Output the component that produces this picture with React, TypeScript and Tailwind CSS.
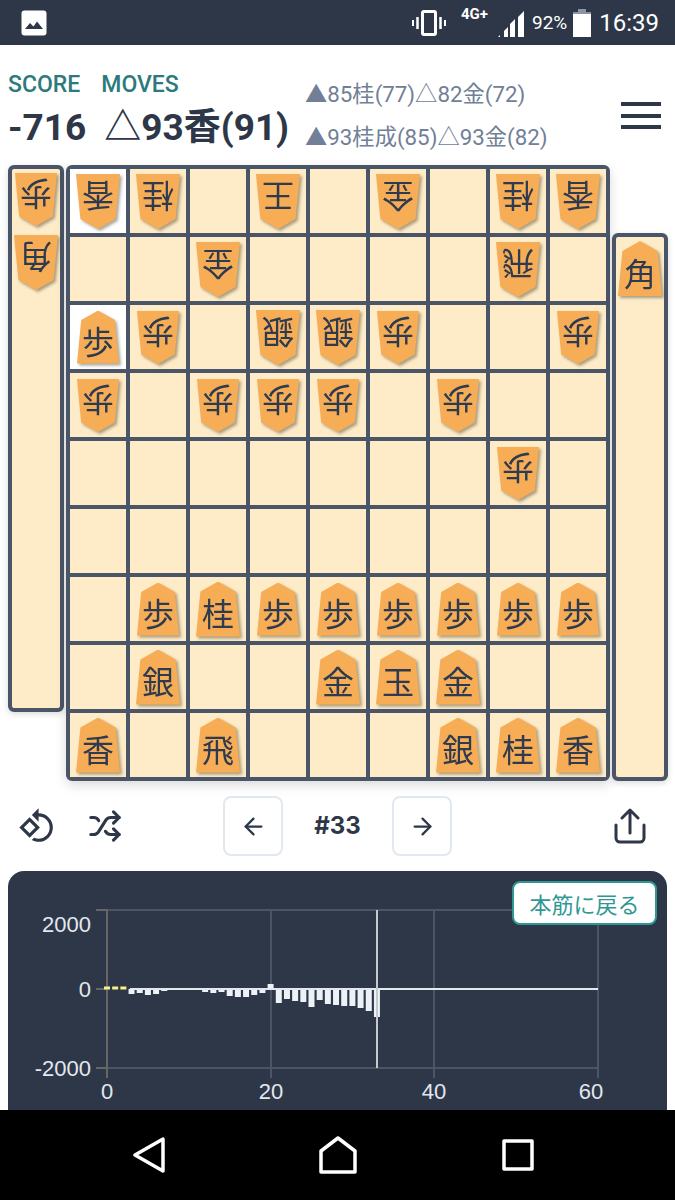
import { ArrowLeft, ArrowRight, Shuffle } from 'lucide-react';
import { MdOutlineRotate90DegreesCcw } from 'react-icons/md';

const SANS = "font-['Roboto','Noto_Sans_CJK_JP',sans-serif]";

type Cell = { t: string; r?: boolean } | null;

const G = (t: string): Cell => ({ t, r: true });
const S = (t: string): Cell => ({ t });
const _ = null;

const BOARD: Cell[][] = [
  [G('香'), G('桂'), _, G('王'), _, G('金'), _, G('桂'), G('香')],
  [_, _, G('金'), _, _, _, _, G('飛'), _],
  [S('歩'), G('歩'), _, G('銀'), G('銀'), G('歩'), _, _, G('歩')],
  [G('歩'), _, G('歩'), G('歩'), G('歩'), _, G('歩'), _, _],
  [_, _, _, _, _, _, _, G('歩'), _],
  [_, _, _, _, _, _, _, _, _],
  [_, S('歩'), S('桂'), S('歩'), S('歩'), S('歩'), S('歩'), S('歩'), S('歩')],
  [_, S('銀'), _, _, S('金'), S('玉'), S('金'), _, _],
  [S('香'), _, S('飛'), _, _, _, S('銀'), S('桂'), S('香')],
];

// px offset from the zero line per move, measured off the chart
const BARS = [
  1, 1, 1, -5, -4, -6, -5, -2, -1, -1, -1, -1, -3, -4, -3, -7, -8, -8, -6, -4, 5, -14, -10, -12, -13, -18, -11, -15,
  -16, -17, -17, -19, -22, -28,
];

function Piece({ t, r }: { t: string; r?: boolean }) {
  const small = t === '歩';
  return (
    <div className="drop-shadow-[2px_2px_1.5px_rgba(60,60,40,0.45)]">
      <div
        className={`flex items-center justify-center bg-[#f6ad55] text-[32px] font-normal leading-none text-[#2d3a50] [clip-path:polygon(50%_0,90%_18%,100%_100%,0_100%,10%_18%)] font-['Noto_Sans_CJK_JP',sans-serif] ${
          small ? 'h-[53px] w-[42px]' : 'h-[55px] w-[44px]'
        } ${r ? 'rotate-180' : ''}`}
      >
        <span className="mt-[6px]">{t}</span>
      </div>
    </div>
  );
}

function StatusBar() {
  return (
    <div className={`flex h-[45px] shrink-0 items-center bg-[#2d3748] text-white ${SANS}`}>
      <svg width="26" height="26" viewBox="0 0 26 26" className="ml-[21px]">
        <rect x="0.5" y="0.5" width="25" height="25" rx="3" fill="#fff" />
        <path d="M4 19l5-6 3.5 3.5 3.5-5 6 7.5z" fill="#2d3748" />
      </svg>
      <svg width="34" height="26" viewBox="0 0 34 26" className="ml-[365px]" fill="none" stroke="#fff">
        <rect x="10.5" y="1.5" width="13" height="23" rx="1.5" strokeWidth="3" />
        <path d="M5.5 7v12M28.5 7v12" strokeWidth="2.5" />
        <path d="M1 10v6M33 10v6" strokeWidth="2" />
      </svg>
      <span className="mb-[16px] ml-[15px] text-[15px] font-bold leading-none">4G+</span>
      <svg width="26" height="26" viewBox="0 0 26 26" className="ml-[10px] mt-[3px]" fill="#fff">
        <path d="M0 26l2-2v2zM6 26v-6l4-4v10zM12 26V13l5-5v18zM20 26V6l6-6v26z" />
      </svg>
      <span className="ml-[8px] text-[19px] leading-none">92%</span>
      <svg width="18" height="28" viewBox="0 0 18 28" className="ml-[6px]">
        <path d="M5 0h8v3H5z" fill="#8a94a3" />
        <path d="M0 3h18v2H0z" fill="#8a94a3" />
        <path d="M0 5h18v23H0z" fill="#fff" />
      </svg>
      <span className="ml-[8px] text-[24px] leading-none">16:39</span>
    </div>
  );
}

function Header() {
  return (
    <div className={`flex h-[120px] shrink-0 ${SANS}`}>
      <div className="ml-[8px] w-[297px] pt-[28px]">
        <div className="flex gap-[21px] text-[23px] font-medium leading-[24px] text-[#2c7a7b]">
          <span>SCORE</span>
          <span>MOVES</span>
        </div>
        <div className="mt-[8px] flex gap-[18px] text-[37px] font-bold leading-[46px] text-[#2d3748]">
          <span>-716</span>
          <span>△93香(91)</span>
        </div>
      </div>
      <div className="w-[316px] pt-[33px] text-[22.3px] leading-[32px] text-[#718096]">
        <div>▲85桂(77)△82金(72)</div>
        <div className="mt-[11px]">▲93桂成(85)△93金(82)</div>
      </div>
      <div className="mt-[57px] flex h-[27px] w-[40px] flex-col justify-between">
        <div className="h-[4px] bg-[#2d3748]" />
        <div className="h-[4px] bg-[#2d3748]" />
        <div className="h-[4px] bg-[#2d3748]" />
      </div>
    </div>
  );
}

function Board() {
  return (
    <div className="grid grid-cols-[repeat(9,56px)] grid-rows-[repeat(9,64px)] gap-[4px] rounded-md border-[4px] border-[#4a5568] bg-[#4a5568] shadow-[0_4px_12px_rgba(0,0,0,0.15)]">
      {BOARD.map((row, y) =>
        row.map((c, x) => {
          const lit = (y === 0 && x === 0) || (y === 2 && x === 0);
          return (
            <div key={`${y}-${x}`} className={`flex items-center justify-center ${lit ? 'bg-white' : 'bg-[#feebc8]'}`}>
              {c && <Piece t={c.t} r={c.r} />}
            </div>
          );
        })
      )}
    </div>
  );
}

function Chart() {
  const x0 = 107;
  const step = 8.18;
  const zero = 989;
  return (
    <div className="relative mx-[8px] flex-1 overflow-hidden rounded-t-2xl bg-[#2d3748]">
      <svg width="659" height="239" viewBox="8 871 659 239" className="block font-['Liberation_Sans',sans-serif]">
        <g stroke="#4a5568" strokeWidth="2">
          <path d="M107 910H598M107 1068H598M271 910V1078M434 910V1078M598 910V1078" />
        </g>
        <path d="M96 910H107V1078M96 989H107M96 1068H107" stroke="#666" strokeWidth="2" fill="none" />
        {BARS.map((v, i) => {
          const cx = x0 + step * i;
          if (i < 3) return <rect key={i} x={cx - 3} y={zero - 2.5} width="6" height="3" fill="#faf089" />;
          return (
            <rect
              key={i}
              x={cx - 3}
              y={v < 0 ? zero : zero - v}
              width="6"
              height={Math.abs(v)}
              fill="#edf2f7"
            />
          );
        })}
        <path d="M130 989H598" stroke="#e2e8f0" strokeWidth="2" />
        <path d="M377 910V1068" stroke="#c6c9ce" strokeWidth="2" />
        <g fill="#e2e8f0" fontSize="22">
          <text x="91" y="932" textAnchor="end">2000</text>
          <text x="91" y="997" textAnchor="end">0</text>
          <text x="91" y="1076" textAnchor="end">-2000</text>
          <text x="107" y="1099" textAnchor="middle">0</text>
          <text x="271" y="1099" textAnchor="middle">20</text>
          <text x="434" y="1099" textAnchor="middle">40</text>
          <text x="591" y="1099" textAnchor="middle">60</text>
        </g>
      </svg>
      <button className="absolute right-[10px] top-[10px] flex h-[44px] w-[145px] items-center justify-center rounded-lg border-2 border-[#319795] bg-white text-[22px] leading-none text-[#319795] font-['Noto_Sans_CJK_JP',sans-serif]">
        本筋に戻る
      </button>
    </div>
  );
}

export default function App() {
  return (
    <div className="flex h-[1200px] w-[675px] flex-col overflow-hidden bg-white">
      <StatusBar />
      <Header />

      <div className="flex shrink-0">
        <div className="ml-[8px] flex h-[547px] w-[56px] flex-col items-center gap-[9px] rounded-md border-[4px] border-[#4a5568] bg-[#feebc8] pt-[4px] shadow-[0_2px_6px_rgba(0,0,0,0.15)]">
          <Piece t="歩" r />
          <Piece t="角" r />
        </div>
        <div className="ml-[2px]">
          <Board />
        </div>
        <div className="ml-[2px] mt-[68px] flex h-[548px] w-[56px] flex-col items-center rounded-md border-[4px] border-[#4a5568] bg-[#feebc8] pt-[4px] shadow-[0_2px_6px_rgba(0,0,0,0.15)]">
          <Piece t="角" />
        </div>
      </div>

      <div className={`mt-[16px] flex h-[58px] shrink-0 items-center text-[#2d3748] ${SANS}`}>
        <MdOutlineRotate90DegreesCcw size={38} className="ml-[18px]" />
        <Shuffle size={34} strokeWidth={2.2} className="ml-[32px]" />
        <button className="ml-[101px] flex h-[60px] w-[60px] items-center justify-center rounded-lg border-2 border-[#e2e8f0]">
          <ArrowLeft size={27} strokeWidth={2} />
        </button>
        <span className="w-[109px] text-center text-[24px] font-bold font-['Inter',sans-serif]">#33</span>
        <button className="flex h-[60px] w-[60px] items-center justify-center rounded-lg border-2 border-[#e2e8f0]">
          <ArrowRight size={27} strokeWidth={2} />
        </button>
        <svg width="32" height="37" viewBox="0 0 32 37" className="ml-[162px]" fill="none" stroke="#2d3748" strokeWidth="3" strokeLinecap="round" strokeLinejoin="round">
          <path d="M2 17v13a4 4 0 0 0 4 4h20a4 4 0 0 0 4-4V17" />
          <path d="M16 25V2M8 10l8-8 8 8" />
        </svg>
      </div>

      <div className="mt-[16px] flex flex-1 flex-col overflow-hidden">
        <Chart />
      </div>

      <div className="flex h-[90px] shrink-0 items-center bg-black">
        <svg width="32" height="36" viewBox="0 0 32 36" className="ml-[133px]" fill="none" stroke="#fff" strokeWidth="3.5" strokeLinejoin="round">
          <path d="M2 18L30 2V34z" />
        </svg>
        <svg width="38" height="38" viewBox="0 0 38 38" className="ml-[154px]" fill="none" stroke="#fff" strokeWidth="3.5" strokeLinejoin="round">
          <path d="M2 15L19 2l17 13v21H2z" />
        </svg>
        <svg width="32" height="32" viewBox="0 0 32 32" className="ml-[145px]" fill="none" stroke="#fff" strokeWidth="3.5" strokeLinejoin="round">
          <rect x="2" y="2" width="28" height="28" />
        </svg>
      </div>
    </div>
  );
}
